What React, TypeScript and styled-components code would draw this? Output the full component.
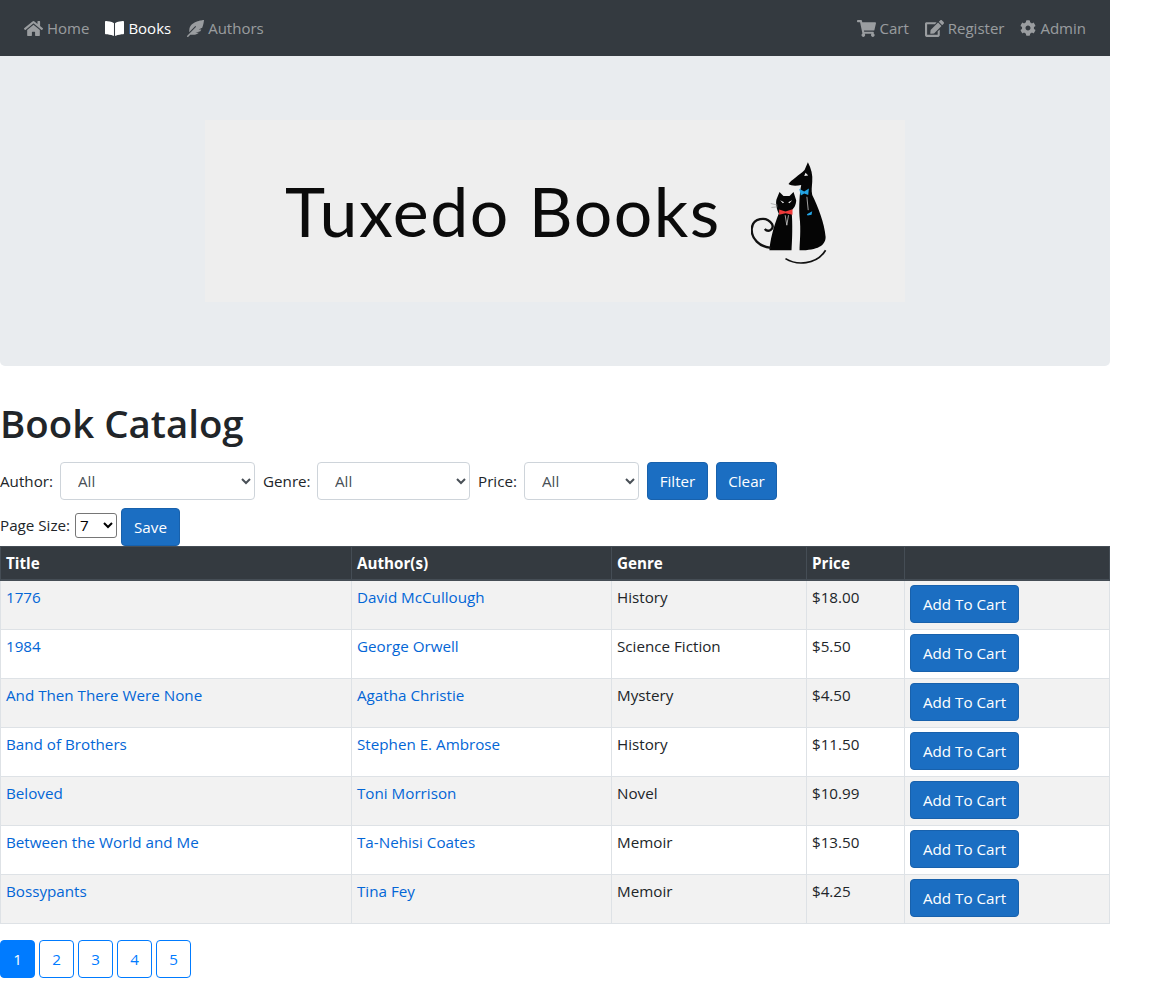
import styled, { createGlobalStyle } from "styled-components";
import {
  FaBookOpen,
  FaCog,
  FaEdit,
  FaFeatherAlt,
  FaHome,
  FaShoppingCart,
} from "react-icons/fa";
import type { FC, ReactNode } from "react";

const FONT = `"Open Sans", "Noto Sans", sans-serif`;

const GlobalStyle = createGlobalStyle`
  html, body {
    margin: 0;
    padding: 0;
    background: #fff;
  }
  body {
    font-family: ${FONT};
    font-size: 15.2px;
    line-height: 24px;
    color: #212529;
  }
  * {
    box-sizing: border-box;
  }
`;

const Page = styled.div`
  width: 1110px;
`;

const NavBar = styled.nav`
  display: flex;
  justify-content: space-between;
  align-items: center;
  height: 56px;
  padding: 0 16px;
  background: #343a40;
`;
const NavGroup = styled.div`
  display: flex;
`;
const NavLink = styled.a<{ $active?: boolean }>`
  display: flex;
  align-items: center;
  gap: 4px;
  padding: 8px;
  font-size: 15px;
  color: ${(props) => (props.$active ? "#fff" : "rgba(255, 255, 255, 0.5)")};
  cursor: pointer;
`;

const Jumbotron = styled.div`
  display: flex;
  justify-content: center;
  padding: 64px 32px;
  margin-bottom: 32px;
  background: #e9ecef;
  border-radius: 0 0 5px 5px;
`;
const Logo = styled.div`
  display: flex;
  align-items: center;
  width: 700px;
  height: 182px;
  padding-left: 80px;
  background: #eeeeee;
`;
const LogoText = styled.span`
  width: 466px;
  font-family: "Lato", sans-serif;
  font-size: 68px;
  line-height: 64px;
  letter-spacing: 1.5px;
  color: #0b0b0b;
  white-space: nowrap;
`;
const CatsSvg = styled.svg`
  margin-top: 5px;
`;

const Heading = styled.h1`
  margin: 0 0 14px;
  font-size: 38.4px;
  line-height: 50px;
  font-weight: 600;
`;

const FilterRow = styled.form`
  display: flex;
  align-items: center;
  gap: 8px;
  height: 38px;
  margin-bottom: 8px;
`;
const SizeRow = styled.form`
  display: flex;
  align-items: center;
  gap: 4px;
  height: 38px;
`;
const FieldLabel = styled.label<{ $width: number }>`
  display: block;
  width: ${(props) => props.$width}px;
  white-space: nowrap;
`;
const SizeLabel = styled(FieldLabel)`
  margin-bottom: 4px;
`;
const FormSelect = styled.select<{ $width: number }>`
  width: ${(props) => props.$width}px;
  height: 38px;
  padding: 6px 12px 6px 13px;
  font-family: ${FONT};
  font-size: 15.2px;
  color: #495057;
  background: #fff;
  border: 1px solid #ced4da;
  border-radius: 4px;
`;
const PlainSelect = styled.select`
  width: 42px;
  height: 25px;
  margin-bottom: 4px;
  font-family: ${FONT};
  font-size: 15.2px;
  color: #000;
  background: #fff;
  border: 1px solid #767676;
  border-radius: 3px;
`;
const Button = styled.button<{ $width: number }>`
  width: ${(props) => props.$width}px;
  height: 38px;
  padding: 0;
  font-family: ${FONT};
  font-size: 15.2px;
  color: #fff;
  background: #1b6ec2;
  border: 1px solid #1861ac;
  border-radius: 4px;
  cursor: pointer;
`;

const Table = styled.table`
  width: 1109px;
  table-layout: fixed;
  border-collapse: collapse;
`;
const HeadCell = styled.th<{ $width: number }>`
  width: ${(props) => props.$width}px;
  height: 33px;
  padding: 4px 5px;
  text-align: left;
  font-weight: 700;
  color: #fff;
  background: #343a40;
  border: 1px solid #454d55;
  border-bottom-width: 2px;
`;
const Row = styled.tr`
  &:nth-child(odd) {
    background: #f2f2f2;
  }
`;
const Cell = styled.td`
  height: 49px;
  padding: 4px 5px;
  vertical-align: top;
  border: 1px solid #dee2e6;
`;
const BookLink = styled.a`
  color: #0366d6;
  cursor: pointer;
`;

const Pager = styled.div`
  display: flex;
  gap: 4px;
  margin-top: 16px;
`;
const PageButton = styled.button<{ $current?: boolean }>`
  width: 35px;
  height: 38px;
  padding: 0;
  font-family: ${FONT};
  font-size: 15.2px;
  color: ${(props) => (props.$current ? "#fff" : "#007bff")};
  background: ${(props) => (props.$current ? "#007bff" : "#fff")};
  border: 1px solid #007bff;
  border-radius: 4px;
  cursor: pointer;
`;

const books = [
  ["1776", "David McCullough", "History", "$18.00"],
  ["1984", "George Orwell", "Science Fiction", "$5.50"],
  ["And Then There Were None", "Agatha Christie", "Mystery", "$4.50"],
  ["Band of Brothers", "Stephen E. Ambrose", "History", "$11.50"],
  ["Beloved", "Toni Morrison", "Novel", "$10.99"],
  ["Between the World and Me", "Ta-Nehisi Coates", "Memoir", "$13.50"],
  ["Bossypants", "Tina Fey", "Memoir", "$4.25"],
];

const CatsLogo = () => (
  <CatsSvg width="77" height="107" viewBox="545 30 230 320" aria-hidden="true">
    <path
      d="M715 37C725 55 730 75 728 95C727 110 725 120 728 135C745 170 765 220 768 260C768 285 745 300 690 300C690 280 695 240 690 200C688 170 690 130 695 105C680 108 665 108 657 102C665 90 690 75 705 60Z"
      fill="#050505"
    />
    <path d="M708 68L716 76L704 78Z" fill="#eee" />
    <path d="M648 325C680 345 740 345 768 300" fill="none" stroke="#111" strokeWidth="5" />
    <path
      d="M630 126L642 138H660L672 126L680 150C680 165 672 176 666 180C670 220 668 270 666 300H600C602 270 612 230 628 190C622 178 618 160 621 148Z"
      fill="#050505"
    />
    <path
      d="M605 293C570 290 545 265 547 235C550 205 590 195 608 222C615 238 596 248 586 236"
      fill="none"
      stroke="#111"
      strokeWidth="7"
    />
    <path d="M629 178L648 184L669 177V194L648 189L629 194Z" fill="#ee3a3a" />
    <path d="M689 116L704 124L718 115L716 135L704 130L694 136Z" fill="#24a4e4" />
    <path d="M712 192L728 183L726 194L714 196Z" fill="#24a4e4" />
    <path d="M647 195L652 225L657 195" fill="none" stroke="#eee" strokeWidth="2" />
    <path d="M712 140L716 180" fill="none" stroke="#eee" strokeWidth="2" />
    <path d="M604 160L624 165M606 172L624 170" stroke="#999" strokeWidth="2" />
    <path d="M632 150L644 156L640 159ZM668 150L656 156L660 159Z" fill="#eee" />
  </CatsSvg>
);

const NavItem: FC<{ icon: ReactNode; label: string; active?: boolean }> = ({
  icon,
  label,
  active,
}) => (
  <NavLink $active={active}>
    {icon}
    {label}
  </NavLink>
);

const App = () => {
  return (
    <Page>
      <GlobalStyle />
      <NavBar>
        <NavGroup>
          <NavItem icon={<FaHome size={19} />} label="Home" />
          <NavItem icon={<FaBookOpen size={19} />} label="Books" active />
          <NavItem icon={<FaFeatherAlt size={17} />} label="Authors" />
        </NavGroup>
        <NavGroup>
          <NavItem icon={<FaShoppingCart size={19} />} label="Cart" />
          <NavItem icon={<FaEdit size={19} />} label="Register" />
          <NavItem icon={<FaCog size={16} />} label="Admin" />
        </NavGroup>
      </NavBar>

      <Jumbotron>
        <Logo>
          <LogoText>Tuxedo Books</LogoText>
          <CatsLogo />
        </Logo>
      </Jumbotron>

      <Heading>Book Catalog</Heading>

      <FilterRow>
        <FieldLabel $width={52}>Author:</FieldLabel>
        <FormSelect $width={195}>
          <option>All</option>
        </FormSelect>
        <FieldLabel $width={46}>Genre:</FieldLabel>
        <FormSelect $width={153}>
          <option>All</option>
        </FormSelect>
        <FieldLabel $width={38}>Price:</FieldLabel>
        <FormSelect $width={115}>
          <option>All</option>
        </FormSelect>
        <Button type="button" $width={61}>
          Filter
        </Button>
        <Button type="button" $width={61}>
          Clear
        </Button>
      </FilterRow>

      <SizeRow>
        <SizeLabel $width={71}>Page Size:</SizeLabel>
        <PlainSelect>
          <option>7</option>
        </PlainSelect>
        <Button type="button" $width={59}>
          Save
        </Button>
      </SizeRow>

      <Table>
        <thead>
          <tr>
            <HeadCell $width={351}>Title</HeadCell>
            <HeadCell $width={260}>Author(s)</HeadCell>
            <HeadCell $width={195}>Genre</HeadCell>
            <HeadCell $width={98}>Price</HeadCell>
            <HeadCell $width={205} />
          </tr>
        </thead>
        <tbody>
          {books.map(([title, author, genre, price]) => (
            <Row key={title}>
              <Cell>
                <BookLink>{title}</BookLink>
              </Cell>
              <Cell>
                <BookLink>{author}</BookLink>
              </Cell>
              <Cell>{genre}</Cell>
              <Cell>{price}</Cell>
              <Cell>
                <Button type="button" $width={109}>
                  Add To Cart
                </Button>
              </Cell>
            </Row>
          ))}
        </tbody>
      </Table>

      <Pager>
        <PageButton $current>1</PageButton>
        <PageButton>2</PageButton>
        <PageButton>3</PageButton>
        <PageButton>4</PageButton>
        <PageButton>5</PageButton>
      </Pager>
    </Page>
  );
};

export default App;
